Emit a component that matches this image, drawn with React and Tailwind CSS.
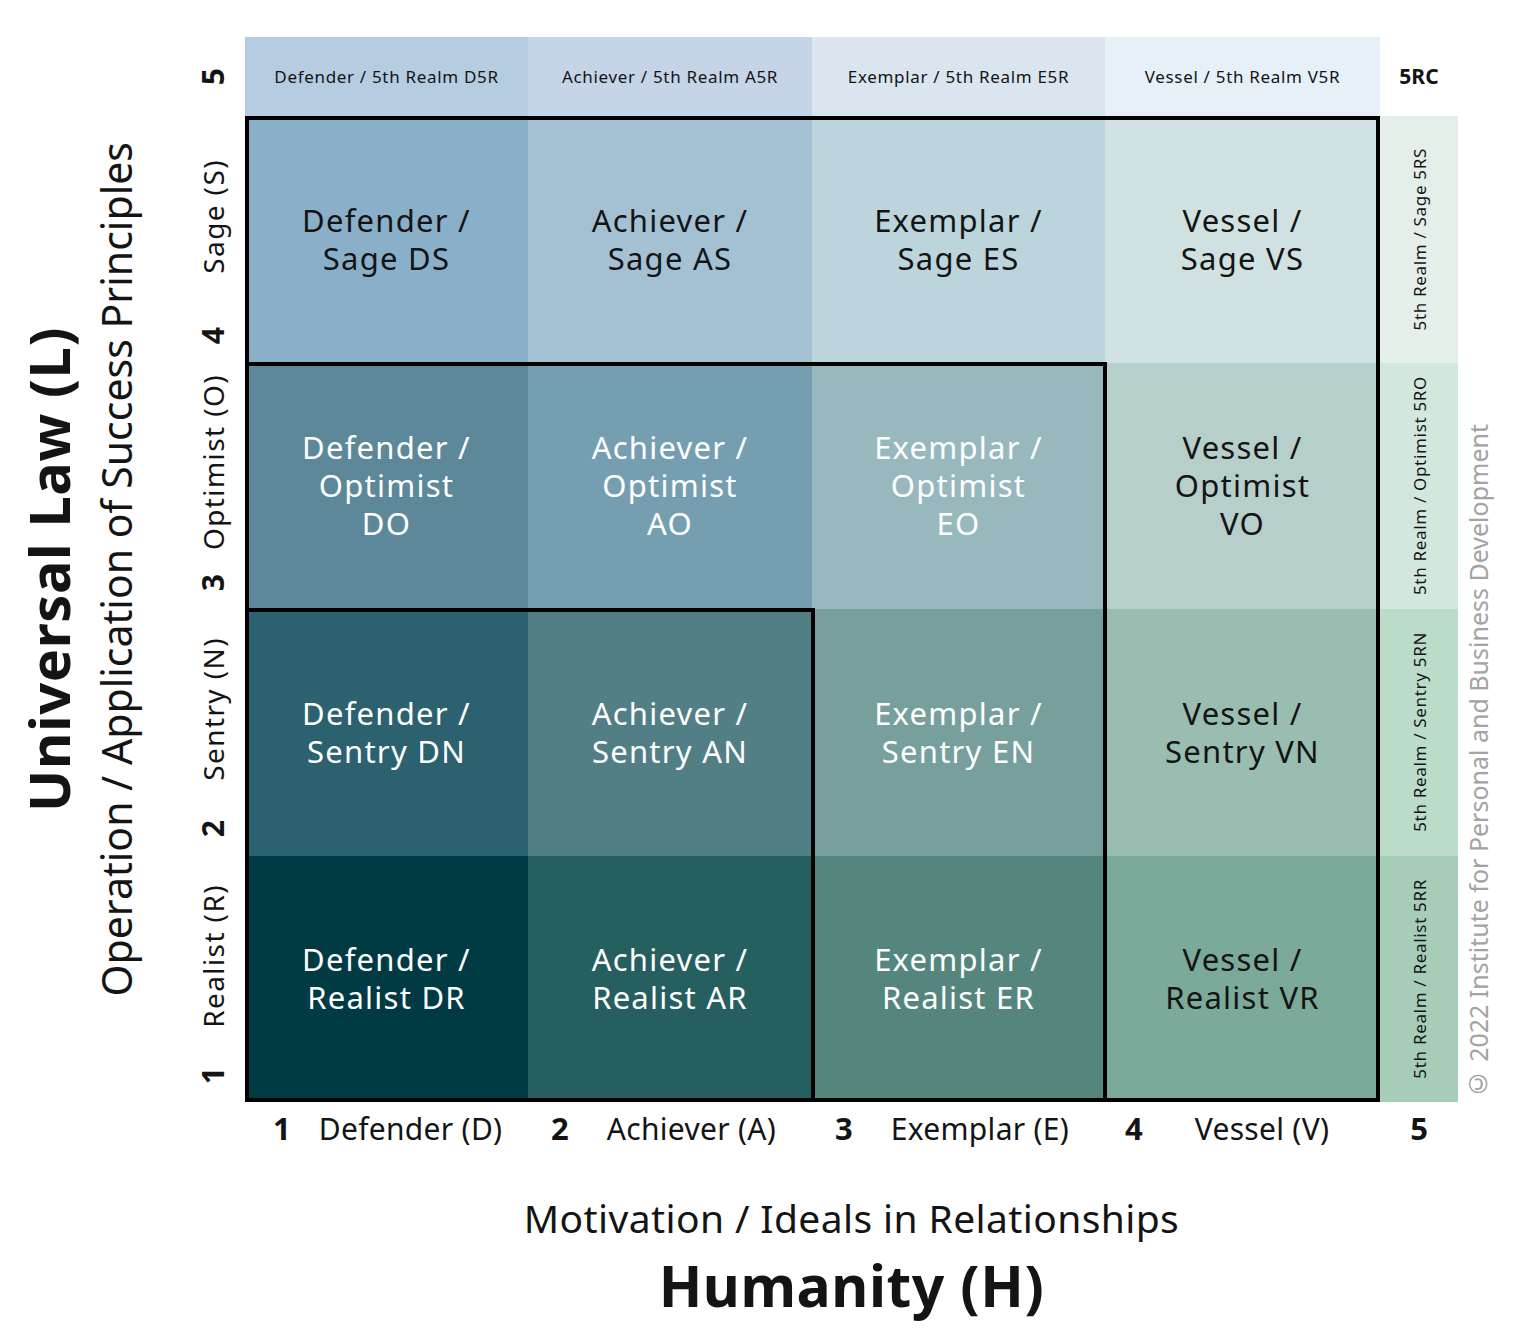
const COLS = ["w-[283px]", "w-[284px]", "w-[293px]", "w-[275px]"];

const TOP = [
  { text: "Defender / 5th Realm D5R", bg: "bg-[#b6cce1]" },
  { text: "Achiever / 5th Realm A5R", bg: "bg-[#c5d5e7]" },
  { text: "Exemplar / 5th Realm E5R", bg: "bg-[#dae5ef]" },
  { text: "Vessel / 5th Realm V5R", bg: "bg-[#e7f0f9]" },
];

// rows from top (Sage) to bottom (Realist)
const ROWS = [
  {
    label: "Sage (S)",
    num: "4",
    side: { text: "5th Realm / Sage 5RS", bg: "bg-[#e4efe9]" },
    cells: [
      { lines: ["Defender /", "Sage DS"], bg: "bg-[#8aafc9]", dark: true },
      { lines: ["Achiever /", "Sage AS"], bg: "bg-[#a3c1d3]", dark: true },
      { lines: ["Exemplar /", "Sage ES"], bg: "bg-[#bcd4dc]", dark: true },
      { lines: ["Vessel /", "Sage VS"], bg: "bg-[#d0e1e2]", dark: true },
    ],
  },
  {
    label: "Optimist (O)",
    num: "3",
    side: { text: "5th Realm / Optimist 5RO", bg: "bg-[#d3e8dd]" },
    cells: [
      { lines: ["Defender /", "Optimist", "DO"], bg: "bg-[#5c8899]" },
      { lines: ["Achiever /", "Optimist", "AO"], bg: "bg-[#759fb1]" },
      { lines: ["Exemplar /", "Optimist", "EO"], bg: "bg-[#97b8bc]" },
      { lines: ["Vessel /", "Optimist", "VO"], bg: "bg-[#b6cfcb]", dark: true },
    ],
  },
  {
    label: "Sentry (N)",
    num: "2",
    side: { text: "5th Realm / Sentry 5RN", bg: "bg-[#bcdcca]" },
    cells: [
      { lines: ["Defender /", "Sentry DN"], bg: "bg-[#2c6170]" },
      { lines: ["Achiever /", "Sentry AN"], bg: "bg-[#527f85]" },
      { lines: ["Exemplar /", "Sentry EN"], bg: "bg-[#779f9c]" },
      { lines: ["Vessel /", "Sentry VN"], bg: "bg-[#9abdb2]", dark: true },
    ],
  },
  {
    label: "Realist (R)",
    num: "1",
    side: { text: "5th Realm / Realist 5RR", bg: "bg-[#a5cdb8]" },
    cells: [
      { lines: ["Defender /", "Realist DR"], bg: "bg-[#003a43]" },
      { lines: ["Achiever /", "Realist AR"], bg: "bg-[#255f5f]" },
      { lines: ["Exemplar /", "Realist ER"], bg: "bg-[#54867d]" },
      { lines: ["Vessel /", "Realist VR"], bg: "bg-[#7ba99a]", dark: true },
    ],
  },
];

const BOTTOM = [
  { num: "1", label: "Defender (D)", pad: "pl-[28px]", gap: "gap-[28px]" },
  { num: "2", label: "Achiever (A)", pad: "pl-[23px]", gap: "gap-[38px]" },
  { num: "3", label: "Exemplar (E)", pad: "pl-[23px]", gap: "gap-[38px]" },
  { num: "4", label: "Vessel (V)", pad: "pl-[20px]", gap: "gap-[52px]" },
];

export default function App() {
  return (
    <div className="w-[1540px] h-[1342px] bg-white flex pt-[37px] text-[#141414] font-['Noto_Sans',sans-serif]">
      {/* Left axis titles */}
      <div className="w-[96px] h-[1065px] flex items-center justify-center">
        <div className="[writing-mode:vertical-rl] rotate-180 text-[56px] tracking-[0.01em] font-bold leading-none whitespace-nowrap">
          Universal Law (L)
        </div>
      </div>
      <div className="w-[40px] h-[1065px] flex items-center justify-center">
        <div className="[writing-mode:vertical-rl] rotate-180 text-[41px] leading-none whitespace-nowrap">
          Operation / Application of Success Principles
        </div>
      </div>
      <div className="w-[56px]" />

      {/* Row labels */}
      <div className="w-[42px] flex flex-col">
        <div className="h-[79px] flex items-center justify-center">
          <span className="[writing-mode:vertical-rl] rotate-180 text-[30px] font-bold leading-none">5</span>
        </div>
        {ROWS.map((r) => (
          <div key={r.label} className="h-[246.5px] flex flex-col items-center">
            <div className="h-[200px] flex items-center justify-center">
              <span className="[writing-mode:vertical-rl] rotate-180 text-[28px] tracking-[0.05em] leading-none whitespace-nowrap">
                {r.label}
              </span>
            </div>
            <div className="h-[40px] flex items-center justify-center">
              <span className="[writing-mode:vertical-rl] rotate-180 text-[30px] font-bold leading-none">
                {r.num}
              </span>
            </div>
          </div>
        ))}
      </div>
      <div className="w-[11px]" />

      {/* Main chart */}
      <div className="w-[1213px] flex flex-col">
        {/* 5th realm top row */}
        <div className="flex h-[79px]">
          {TOP.map((t, i) => (
            <div key={t.text} className={`${COLS[i]} ${t.bg} flex items-center justify-center text-[17px] tracking-[0.04em] whitespace-nowrap`}>
              {t.text}
            </div>
          ))}
          <div className="w-[78px] flex items-center justify-center text-[21px] font-bold">5RC</div>
        </div>

        {/* grid body */}
        <div className="flex">
          <div className="relative w-[1135px] h-[986px] flex flex-col">
            {ROWS.map((r) => (
              <div key={r.label} className="flex h-[246.5px]">
                {r.cells.map((c, i) => (
                  <div
                    key={i}
                    className={`${COLS[i]} ${c.bg} flex flex-col items-center justify-center pb-[1px] text-[31px] tracking-[0.04em] leading-[38px] ${c.dark ? "text-[#141414]" : "text-white"}`}
                  >
                    {c.lines.map((l) => (
                      <span key={l} className="whitespace-nowrap">{l}</span>
                    ))}
                  </div>
                ))}
              </div>
            ))}
            {/* staircase outlines */}
            <div className="absolute inset-0 border-4 border-black" />
            <div className="absolute left-0 top-[246px] bottom-0 w-[862px] border-4 border-black" />
            <div className="absolute left-0 top-[492px] bottom-0 w-[570px] border-4 border-black" />
          </div>
          <div className="w-[78px] flex flex-col">
            {ROWS.map((r) => (
              <div key={r.side.text} className={`h-[246.5px] ${r.side.bg} flex items-center justify-center`}>
                <span className="[writing-mode:vertical-rl] rotate-180 text-[17px] tracking-[0.04em] leading-none whitespace-nowrap">
                  {r.side.text}
                </span>
              </div>
            ))}
          </div>
        </div>

        {/* column labels */}
        <div className="flex h-[52px] items-center">
          {BOTTOM.map((b, i) => (
            <div key={b.num} className={`${COLS[i]} ${b.pad} ${b.gap} flex items-center`}>
              <span className="text-[31px] font-bold">{b.num}</span>
              <span className="text-[30px] tracking-[0.01em]">{b.label}</span>
            </div>
          ))}
          <div className="w-[78px] flex justify-center text-[31px] font-bold">5</div>
        </div>

        <div className="mt-[40px] text-center text-[39px] tracking-[0.01em] leading-[48px]">
          Motivation / Ideals in Relationships
        </div>
        <div className="mt-[11px] text-center text-[57px] tracking-[0.01em] leading-[64px] font-bold">Humanity (H)</div>
      </div>

      {/* copyright */}
      <div className="w-[82px] h-[1065px] flex items-end pl-[8px]">
        <div className="[writing-mode:vertical-rl] rotate-180 text-[25px] leading-none text-[#a3a3a3] whitespace-nowrap">
          © 2022 Institute for Personal and Business Development
        </div>
      </div>
    </div>
  );
}
